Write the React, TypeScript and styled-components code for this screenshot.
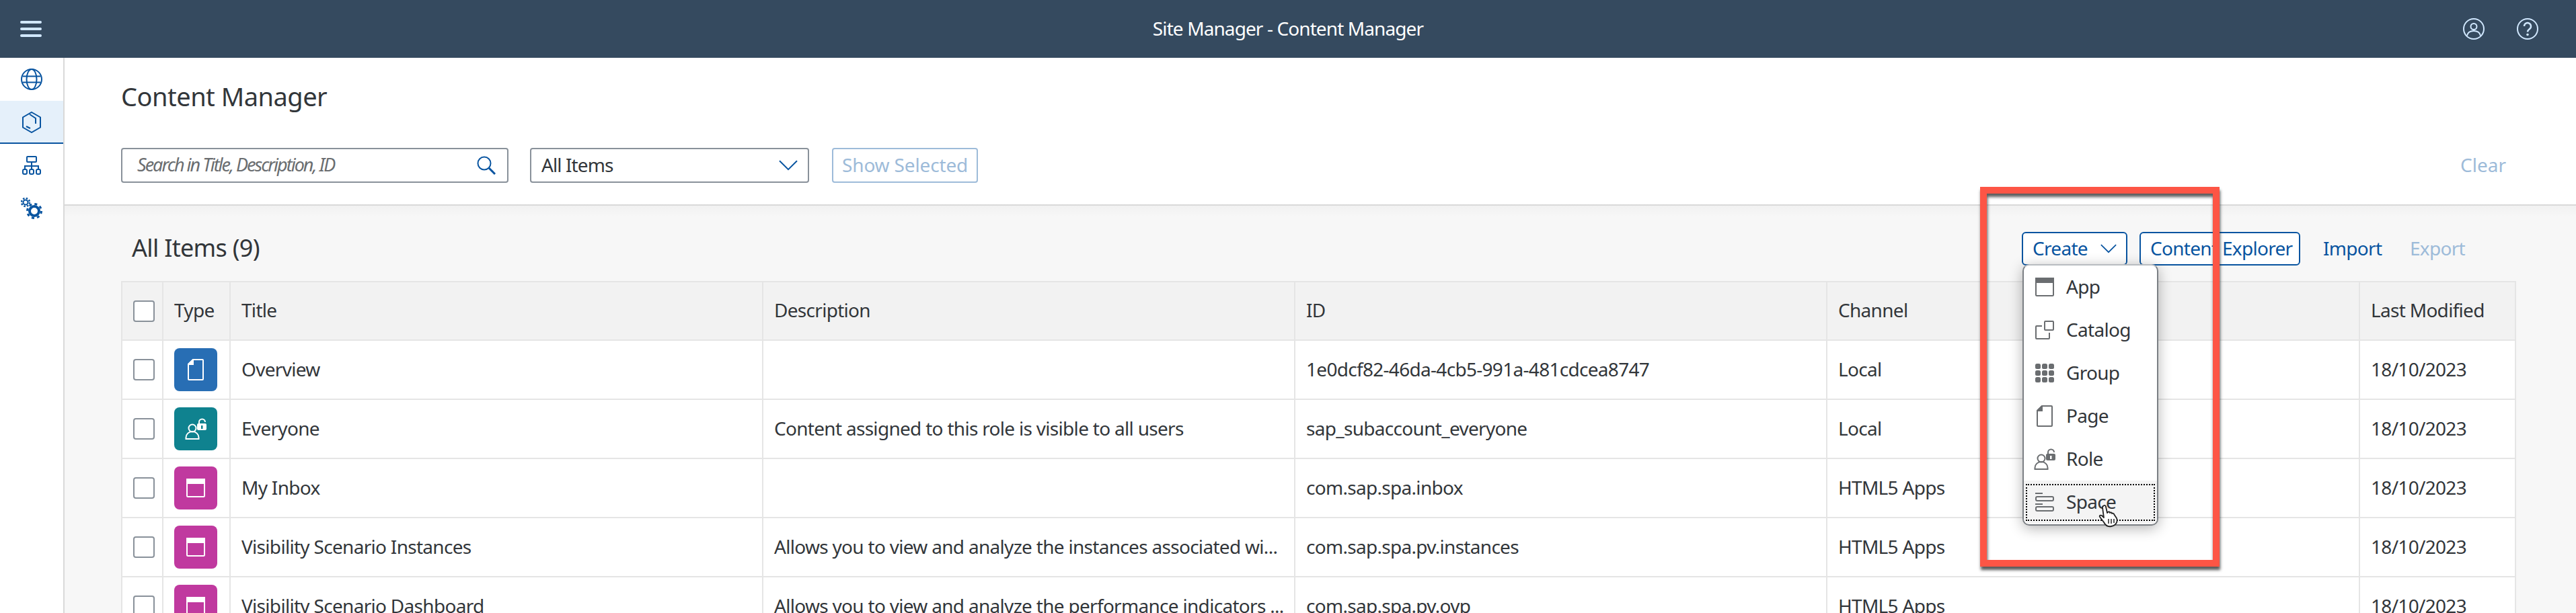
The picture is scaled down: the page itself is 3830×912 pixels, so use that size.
import React from 'react';
import styled, { createGlobalStyle } from 'styled-components';

const blue = '#0854a0';
const ink = '#32363a';
const shellIcon = '#d1e8ff';
const line = '#e5e5e5';
const grey = '#6a6d70';
const faded = '#9dbbd9';
const fontStack = '"Noto Sans", "Open Sans", Arial, sans-serif';

const GlobalStyle = createGlobalStyle`
  html, body { margin: 0; padding: 0; background: #fff; }
  body { font-family: ${fontStack}; color: ${ink}; }
  * { box-sizing: border-box; }
`;

const Page = styled.div`
  position: relative;
  width: 3830px;
  height: 912px;
  overflow: hidden;
  display: flex;
  flex-direction: column;
`;

const Shell = styled.header`
  height: 86px;
  flex: none;
  background: #354a5f;
  display: grid;
  grid-template-columns: 1fr auto 1fr;
  align-items: center;
`;
const ShellTitle = styled.div`
  color: #fff;
  font-size: 28px;
  letter-spacing: -0.9px;
  padding-bottom: 3px;
`;
const ShellActions = styled.div`
  display: flex;
  justify-content: flex-end;
  gap: 48px;
  margin-right: 56px;
`;
const Burger = styled.div`
  width: 32px;
  margin-left: 30px;
  display: flex;
  flex-direction: column;
  gap: 6px;
  span {
    display: block;
    height: 4px;
    border-radius: 2px;
    background: ${shellIcon};
  }
`;

const Body = styled.div`
  flex: 1;
  display: flex;
  min-height: 0;
`;
const Side = styled.nav`
  width: 96px;
  flex: none;
  border-right: 2px solid #d9d9d9;
`;
const SideItem = styled.div<{ $active?: boolean }>`
  height: 64px;
  display: flex;
  align-items: center;
  justify-content: center;
  background: ${p => (p.$active ? '#e5f0fa' : 'transparent')};
  border-bottom: 2px solid ${p => (p.$active ? blue : 'transparent')};
  padding-top: 2px;
`;

const Main = styled.main`
  flex: 1;
  min-width: 0;
  display: flex;
  flex-direction: column;
`;
const Head = styled.section`
  height: 220px;
  flex: none;
  padding: 34px 104px 0 84px;
  border-bottom: 2px solid #d9d9d9;
`;
const H1 = styled.h1`
  margin: 0;
  height: 100px;
  line-height: 46px;
  font-size: 38px;
  font-weight: 400;
  letter-spacing: -0.5px;
`;
const Filters = styled.div`
  display: flex;
  align-items: center;
  gap: 32px;
  height: 52px;
`;
const SearchBox = styled.div`
  width: 576px;
  height: 52px;
  border: 2px solid #89919a;
  border-radius: 4px;
  display: flex;
  align-items: center;
  justify-content: space-between;
  padding: 0 17px 3px 22px;
  font-size: 27px;
  font-style: italic;
  color: ${grey};
  letter-spacing: -2px;
  svg { margin-top: 3px; }
`;
const SelectBox = styled.div`
  width: 415px;
  height: 52px;
  border: 2px solid #89919a;
  border-radius: 4px;
  display: flex;
  align-items: center;
  justify-content: space-between;
  padding: 0 15px 3px 15px;
  font-size: 28px;
  letter-spacing: -0.9px;
  svg { margin-top: 3px; }
`;
const GhostButton = styled.div`
  height: 52px;
  margin-left: 2px;
  padding: 0 13px 3px;
  border: 2px solid ${faded};
  border-radius: 4px;
  color: ${faded};
  font-size: 28px;
  letter-spacing: -0.15px;
  display: flex;
  align-items: center;
`;
const ClearLink = styled.div`
  margin-left: auto;
  padding-bottom: 3px;
  color: ${faded};
  font-size: 28px;
`;

const ListArea = styled.section`
  flex: 1;
  min-height: 0;
  background: linear-gradient(#f1f1f1, #f7f7f7 16px);
  padding: 0 0 0 84px;
`;
const ListBar = styled.div`
  height: 112px;
  width: 3561px;
  display: flex;
  align-items: center;
  padding: 16px 45px 0 16px;
`;
const ListTitle = styled.h2`
  margin: 0;
  padding-bottom: 3px;
  font-size: 36px;
  font-weight: 400;
  letter-spacing: -0.7px;
`;
const Actions = styled.div`
  margin-left: auto;
  display: flex;
  align-items: center;
  color: ${blue};
  font-size: 28px;
  letter-spacing: -0.7px;
  white-space: nowrap;
`;
const OutlineButton = styled.div<{ $width: number }>`
  width: ${p => p.$width}px;
  height: 50px;
  margin-right: 18px;
  border: 2px solid ${blue};
  border-radius: 6px;
  background: #fff;
  display: flex;
  align-items: center;
  justify-content: space-between;
  padding: 0 14px 3px;
  svg { margin-top: 3px; }
`;
const TextAction = styled.div<{ $off?: boolean }>`
  width: 113px;
  margin-left: 16px;
  padding-bottom: 3px;
  color: ${p => (p.$off ? faded : blue)};
`;

const Table = styled.div`
  width: 3561px;
  border: solid ${line};
  border-width: 2px 0 0 2px;
  font-size: 28px;
  letter-spacing: -0.7px;
`;
const Row = styled.div<{ $head?: boolean }>`
  display: grid;
  grid-template-columns: 61px 100px 792px 791px 791px 792px 232px;
  height: ${p => (p.$head ? 87 : 88)}px;
  background: ${p => (p.$head ? '#f2f2f2' : '#fff')};
  border-bottom: 2px solid ${line};
`;
const Cell = styled.div`
  display: flex;
  align-items: center;
  padding: 0 16px 3px;
  border-right: 2px solid ${line};
  white-space: nowrap;
  overflow: hidden;
`;
const IconCell = styled(Cell)`
  padding: 0 16px;
`;
const CheckCell = styled(Cell)`
  padding: 0 0 0 16px;
`;
const Check = styled.div`
  width: 32px;
  height: 32px;
  background: #fff;
  border: 2px solid #89919a;
  border-radius: 4px;
`;
const Tile = styled.div<{ $bg: string }>`
  width: 64px;
  height: 64px;
  flex: none;
  border-radius: 8px;
  background: ${p => p.$bg};
  display: flex;
  align-items: center;
  justify-content: center;
`;

const Menu = styled.div`
  position: absolute;
  left: 3007px;
  top: 393px;
  width: 202px;
  height: 389px;
  background: #fff;
  border: 2px solid #7b7f84;
  border-top-color: #b8bcc0;
  border-radius: 10px;
  box-shadow: 0 4px 20px rgba(0, 0, 0, 0.3);
  font-size: 28px;
  letter-spacing: -0.7px;
  overflow: hidden;
`;
const MenuItem = styled.div<{ $focus?: boolean }>`
  position: relative;
  height: 64px;
  display: flex;
  align-items: center;
  background: ${p => (p.$focus ? '#f4f4f4' : 'transparent')};
  ${p => p.$focus && `
    &::after {
      content: '';
      position: absolute;
      inset: 5px 3px 4px 3px;
      border: 2px dotted #000;
    }
  `}
`;
const MenuIcon = styled.div`
  width: 64px;
  flex: none;
  display: flex;
  justify-content: center;
  margin-right: -1px;
  padding-right: 2px;
`;
const MenuLabel = styled.span`
  padding-bottom: 3px;
`;
const Cursor = styled.svg`
  position: absolute;
  left: 3120px;
  top: 751px;
`;
const Callout = styled.div`
  position: absolute;
  left: 2944px;
  top: 278px;
  width: 356px;
  height: 565px;
  border: 10px solid #fd5545;
  box-shadow: 1px 5px 4px rgba(50, 50, 50, 0.8), inset 1px 5px 4px rgba(50, 50, 50, 0.8);
  pointer-events: none;
`;

const Ic = ({ w, h, children, color = blue, sw = 2 }: { w: number; h: number; children: React.ReactNode; color?: string; sw?: number }) => (
  <svg width={w} height={h} viewBox={`0 0 ${w} ${h}`} fill="none" stroke={color} strokeWidth={sw}>{children}</svg>
);

const PageGlyph = ({ color }: { color: string }) => (
  <Ic w={24} h={32} color={color}>
    <path d="M8 1H22a1 1 0 0 1 1 1V30a1 1 0 0 1-1 1H2a1 1 0 0 1-1-1V8Z" />
    <path d="M8 1V8H1Z" fill={color} />
  </Ic>
);
const RoleGlyph = ({ color, hole }: { color: string; hole: string }) => (
  <Ic w={33} h={32} color={color}>
    <circle cx="11" cy="15" r="5.5" />
    <path d="M1.5 31v-2a9.5 9 0 0 1 19 0v2Z" />
    <path d="M21 8V6a4.5 4.5 0 0 1 9 0" />
    <rect x="18" y="8" width="14" height="10" rx="2" fill={color} stroke="none" />
    <rect x="24" y="11" width="2.5" height="5" fill={hole} stroke="none" />
  </Ic>
);
const AppGlyph = ({ color }: { color: string }) => (
  <Ic w={28} h={28} color={color}>
    <rect x="1" y="1" width="26" height="26" rx="1.5" />
    <rect x="0" y="0" width="28" height="8" fill={color} stroke="none" />
  </Ic>
);

const rows = [
  { tile: '#286eb4', glyph: <PageGlyph color="#fff" />, title: 'Overview', desc: '', id: '1e0dcf82-46da-4cb5-991a-481cdcea8747', channel: 'Local' },
  { tile: '#0f828f', glyph: <RoleGlyph color="#fff" hole="#0f828f" />, title: 'Everyone', desc: 'Content assigned to this role is visible to all users', id: 'sap_subaccount_everyone', channel: 'Local' },
  { tile: '#c0399f', glyph: <AppGlyph color="#fff" />, title: 'My Inbox', desc: '', id: 'com.sap.spa.inbox', channel: 'HTML5 Apps' },
  { tile: '#c0399f', glyph: <AppGlyph color="#fff" />, title: 'Visibility Scenario Instances', desc: 'Allows you to view and analyze the instances associated wi...', id: 'com.sap.spa.pv.instances', channel: 'HTML5 Apps' },
  { tile: '#c0399f', glyph: <AppGlyph color="#fff" />, title: 'Visibility Scenario Dashboard', desc: 'Allows you to view and analyze the performance indicators ...', id: 'com.sap.spa.pv.ovp', channel: 'HTML5 Apps' },
];

const menuItems = [
  { label: 'App', icon: <AppGlyph color={grey} /> },
  {
    label: 'Catalog',
    icon: (
      <Ic w={28} h={28} color={grey}>
        <rect x="14" y="1" width="13" height="13" rx="1" />
        <path d="M10 8H2a1 1 0 0 0-1 1V26a1 1 0 0 0 1 1H20a1 1 0 0 0 1-1V18" />
      </Ic>
    ),
  },
  {
    label: 'Group',
    icon: (
      <Ic w={28} h={28} color={grey}>
        {[0, 10, 20].flatMap(y => [0, 10, 20].map(x => <rect key={`${x}-${y}`} x={x} y={y} width="8" height="8" rx="2.5" fill={grey} stroke="none" />))}
      </Ic>
    ),
  },
  { label: 'Page', icon: <PageGlyph color={grey} /> },
  { label: 'Role', icon: <RoleGlyph color={grey} hole="#fff" /> },
  {
    label: 'Space',
    icon: (
      <Ic w={28} h={28} color={grey}>
        <path d="M0 1H11M0 17H11" />
        <rect x="1" y="6" width="26" height="6" rx="2" />
        <rect x="1" y="21" width="26" height="6" rx="2" />
      </Ic>
    ),
  },
];

const Chevron = ({ w }: { w: number }) => (
  <svg width={w} height={w * 0.55} viewBox="0 0 28 15" fill="none" stroke={blue} strokeWidth="2"><path d="M1 1L14 14L27 1" /></svg>
);

const App = () => (
  <Page>
    <GlobalStyle />
    <Shell>
      <Burger><span /><span /><span /></Burger>
      <ShellTitle>Site Manager - Content Manager</ShellTitle>
      <ShellActions>
        <Ic w={32} h={32} color={shellIcon}>
          <circle cx="16" cy="16" r="15" />
          <circle cx="16" cy="12.5" r="4.5" />
          <path d="M6 26c1-5 5-7 10-7s9 2 10 7" />
        </Ic>
        <Ic w={32} h={32} color={shellIcon}>
          <circle cx="16" cy="16" r="15" />
          <path d="M11 12a5 5 0 1 1 8 4c-2 1.5-3 2.5-3 4.5" strokeWidth="2.5" />
          <circle cx="16" cy="24.5" r="1.8" fill={shellIcon} stroke="none" />
        </Ic>
      </ShellActions>
    </Shell>
    <Body>
      <Side>
        <SideItem>
          <Ic w={32} h={32}>
            <circle cx="16" cy="16" r="15" />
            <ellipse cx="16" cy="16" rx="7.5" ry="15" />
            <path d="M2.5 11.5H29.5M2.5 20.5H29.5" />
          </Ic>
        </SideItem>
        <SideItem $active>
          <Ic w={28} h={32}>
            <path d="M14 1L27 8.5V23.5L14 31L1 23.5V8.5Z" />
            <path d="M11 4L20 10V18M6 22L12 25" />
          </Ic>
        </SideItem>
        <SideItem>
          <Ic w={28} h={28}>
            <rect x="7" y="1" width="14" height="8" rx="1" />
            <path d="M14 9V15M4 20V15H24V20M14 15V20" />
            <rect x="1" y="20" width="6" height="7" rx="2" />
            <rect x="11" y="20" width="6" height="7" rx="2" />
            <rect x="21" y="20" width="6" height="7" rx="2" />
          </Ic>
        </SideItem>
        <SideItem>
          <Ic w={32} h={32}>
            <circle cx="7" cy="7" r="3.5" strokeWidth="2" />
            <circle cx="7" cy="7" r="6" strokeWidth="2.5" strokeDasharray="2.5 2.2" />
            <circle cx="20" cy="20" r="7" strokeWidth="4" />
            <circle cx="20" cy="20" r="10.5" strokeWidth="3" strokeDasharray="4 4.25" />
          </Ic>
        </SideItem>
      </Side>
      <Main>
        <Head>
          <H1>Content Manager</H1>
          <Filters>
            <SearchBox>
              Search in Title, Description, ID
              <Ic w={28} h={28}>
                <circle cx="11" cy="11" r="9.5" />
                <path d="M18 18L27 27" strokeWidth="3" />
              </Ic>
            </SearchBox>
            <SelectBox>
              All Items
              <Chevron w={28} />
            </SelectBox>
            <GhostButton>Show Selected</GhostButton>
            <ClearLink>Clear</ClearLink>
          </Filters>
        </Head>
        <ListArea>
          <ListBar>
            <ListTitle>All Items (9)</ListTitle>
            <Actions>
              <OutlineButton $width={157}>Create <Chevron w={24} /></OutlineButton>
              <OutlineButton $width={239}>Content Explorer</OutlineButton>
              <TextAction>Import</TextAction>
              <TextAction $off>Export</TextAction>
            </Actions>
          </ListBar>
          <Table>
            <Row $head>
              <CheckCell><Check /></CheckCell>
              <Cell>Type</Cell>
              <Cell>Title</Cell>
              <Cell>Description</Cell>
              <Cell>ID</Cell>
              <Cell>Channel</Cell>
              <Cell>Last Modified</Cell>
            </Row>
            {rows.map(r => (
              <Row key={r.title}>
                <CheckCell><Check /></CheckCell>
                <IconCell><Tile $bg={r.tile}>{r.glyph}</Tile></IconCell>
                <Cell>{r.title}</Cell>
                <Cell>{r.desc}</Cell>
                <Cell>{r.id}</Cell>
                <Cell>{r.channel}</Cell>
                <Cell>18/10/2023</Cell>
              </Row>
            ))}
          </Table>
        </ListArea>
      </Main>
    </Body>
    <Menu>
      {menuItems.map(m => (
        <MenuItem key={m.label} $focus={m.label === 'Space'}>
          <MenuIcon>{m.icon}</MenuIcon>
          <MenuLabel>{m.label}</MenuLabel>
        </MenuItem>
      ))}
    </Menu>
    <Cursor width="32" height="34" viewBox="0 0 32 34">
      <path d="M7 2c2-2 4-1 4 1l2 9 1-1c1-1 3-1 3 1 1-1 3-1 3 1 1-1 3 0 3 1l4 6c2 5-1 11-8 12-5 1-9-2-11-6l-6-8c-1-2 1-3 3-2l3 3-2-15c0-1 0-2 1-2Z" fill="#fff" stroke="#222" strokeWidth="1.8" strokeLinejoin="round" />
      <path d="M15 21v7M19 21v7M23 21v6" stroke="#222" strokeWidth="1.5" />
    </Cursor>
    <Callout />
  </Page>
);

export default App;
